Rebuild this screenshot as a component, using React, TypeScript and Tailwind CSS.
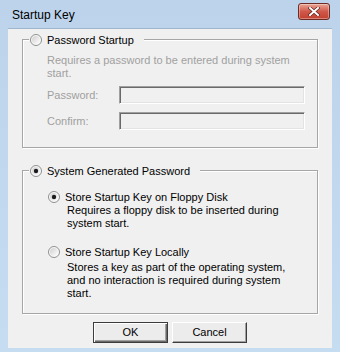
import React from 'react'

/* ─── Bits ─── */

function Radio({ checked = false }: { checked?: boolean }) {
  return (
    <svg width="12" height="12" viewBox="0 0 12 12" className="shrink-0" aria-hidden="true">
      <defs>
        <linearGradient id="rg" x1="0" y1="0" x2="1" y2="1">
          <stop offset="0" stopColor="#cfcfcf" />
          <stop offset="1" stopColor="#ffffff" />
        </linearGradient>
      </defs>
      <circle cx="6" cy="6" r="5.5" fill="#fafafa" stroke="#8e8f8f" />
      <circle cx="6" cy="6" r="4" fill="url(#rg)" />
      {checked && <circle cx="6" cy="6" r="2.2" fill="#1c1c1c" />}
    </svg>
  )
}

function Field({ label }: { label: string }) {
  return (
    <div className="flex items-center h-[18px]">
      <span className="w-[72px] text-[#a0a0a0]">{label}</span>
      <div className="w-[186px] h-[18px] bg-[#f0f0f0] border border-t-[#a0a0a0] border-l-[#a0a0a0] border-b-white border-r-white shadow-[inset_1px_1px_0_#696969,inset_-1px_-1px_0_#e3e3e3]" />
    </div>
  )
}

function Legend({ checked, children }: { checked?: boolean; children: React.ReactNode }) {
  return (
    <div className="-mt-[7px] ml-[6px] w-fit h-[14px] pl-[1px] pr-[10px] flex items-center gap-[5px] bg-[#f0f0f0]">
      <Radio checked={checked} />
      <span className="leading-[14px] text-black">{children}</span>
    </div>
  )
}

function Button({ children, isDefault }: { children: React.ReactNode; isDefault?: boolean }) {
  return (
    <button
      className={
        isDefault
          ? 'w-[75px] h-[21px] bg-[#ececec] border border-[#3c3c3c] shadow-[inset_1px_1px_0_#ffffff,inset_-1px_-1px_0_#696969,inset_-2px_-2px_0_#a0a0a0] text-black leading-none'
          : 'w-[75px] h-[21px] bg-[#ececec] border border-t-white border-l-white border-b-[#3c3c3c] border-r-[#3c3c3c] shadow-[inset_-1px_-1px_0_#a0a0a0] text-black leading-none'
      }
    >
      {children}
    </button>
  )
}

/* ─── Dialog ─── */
export default function App() {
  return (
    <div className="w-[340px] h-[352px] flex flex-col bg-gradient-to-b from-[#bcd3eb] to-[#c6dcf1] font-['Liberation_Sans',Arial,sans-serif] text-[11px] overflow-hidden">
      {/* title bar */}
      <div className="h-[28px] flex items-center justify-between pl-[12px] pr-[10px] shrink-0">
        <span className="text-[12px] text-black pt-[2px]">Startup Key</span>
        <div className="w-[32px] h-[17px] -mt-[5px] rounded-[3px] border border-[#6d2b24] bg-gradient-to-b from-[#e8a596] via-[#d0584a] to-[#c2402f] flex items-center justify-center shadow-[inset_0_0_0_1px_rgba(255,255,255,0.35)]">
          <svg width="12" height="9" viewBox="0 0 12 9" aria-hidden="true">
            <path d="M2 1 L10 8 M10 1 L2 8" stroke="#5a1f18" strokeWidth="3.2" strokeLinecap="square" />
            <path d="M2 1 L10 8 M10 1 L2 8" stroke="#ffffff" strokeWidth="2" strokeLinecap="square" />
          </svg>
        </div>
      </div>

      {/* client */}
      <div className="mx-[8px] mb-[4px] flex-1 bg-[#f0f0f0] border-t border-[#9fb6cf] flex flex-col px-[14px]">
        {/* group 1 */}
        <div className="mt-[10px] h-[109px] border border-[#a6a6a6] shadow-[inset_1px_1px_0_#ffffff,1px_1px_0_#ffffff] flex flex-col">
          <Legend>Password Startup</Legend>
          <div className="pl-[24px] mt-[7px] leading-[13px] text-[#a0a0a0]">
            <div>Requires a password to be entered during system</div>
            <div>start.</div>
          </div>
          <div className="pl-[24px] mt-[6px] flex flex-col gap-[8px]">
            <Field label="Password:" />
            <Field label="Confirm:" />
          </div>
        </div>

        {/* group 2 */}
        <div className="mt-[22px] h-[144px] border border-[#a6a6a6] shadow-[inset_1px_1px_0_#ffffff,1px_1px_0_#ffffff] flex flex-col">
          <Legend checked>System Generated Password</Legend>
          <div className="pl-[25px] mt-[12px] h-[14px] flex items-center gap-[5px]">
            <Radio checked />
            <span className="leading-[14px]">Store Startup Key on Floppy Disk</span>
          </div>
          <div className="pl-[44px] leading-[13px]">
            <div>Requires a floppy disk to be inserted during</div>
            <div>system start.</div>
          </div>
          <div className="pl-[25px] mt-[15px] h-[14px] flex items-center gap-[5px]">
            <Radio />
            <span className="leading-[14px]">Store Startup Key Locally</span>
          </div>
          <div className="pl-[44px] mt-[2px] leading-[13px]">
            <div>Stores a key as part of the operating system,</div>
            <div>and no interaction is required during system</div>
            <div>start.</div>
          </div>
        </div>

        {/* buttons */}
        <div className="mt-[8px] flex justify-center gap-[4px]">
          <Button isDefault>OK</Button>
          <Button>Cancel</Button>
        </div>
      </div>
    </div>
  )
}
